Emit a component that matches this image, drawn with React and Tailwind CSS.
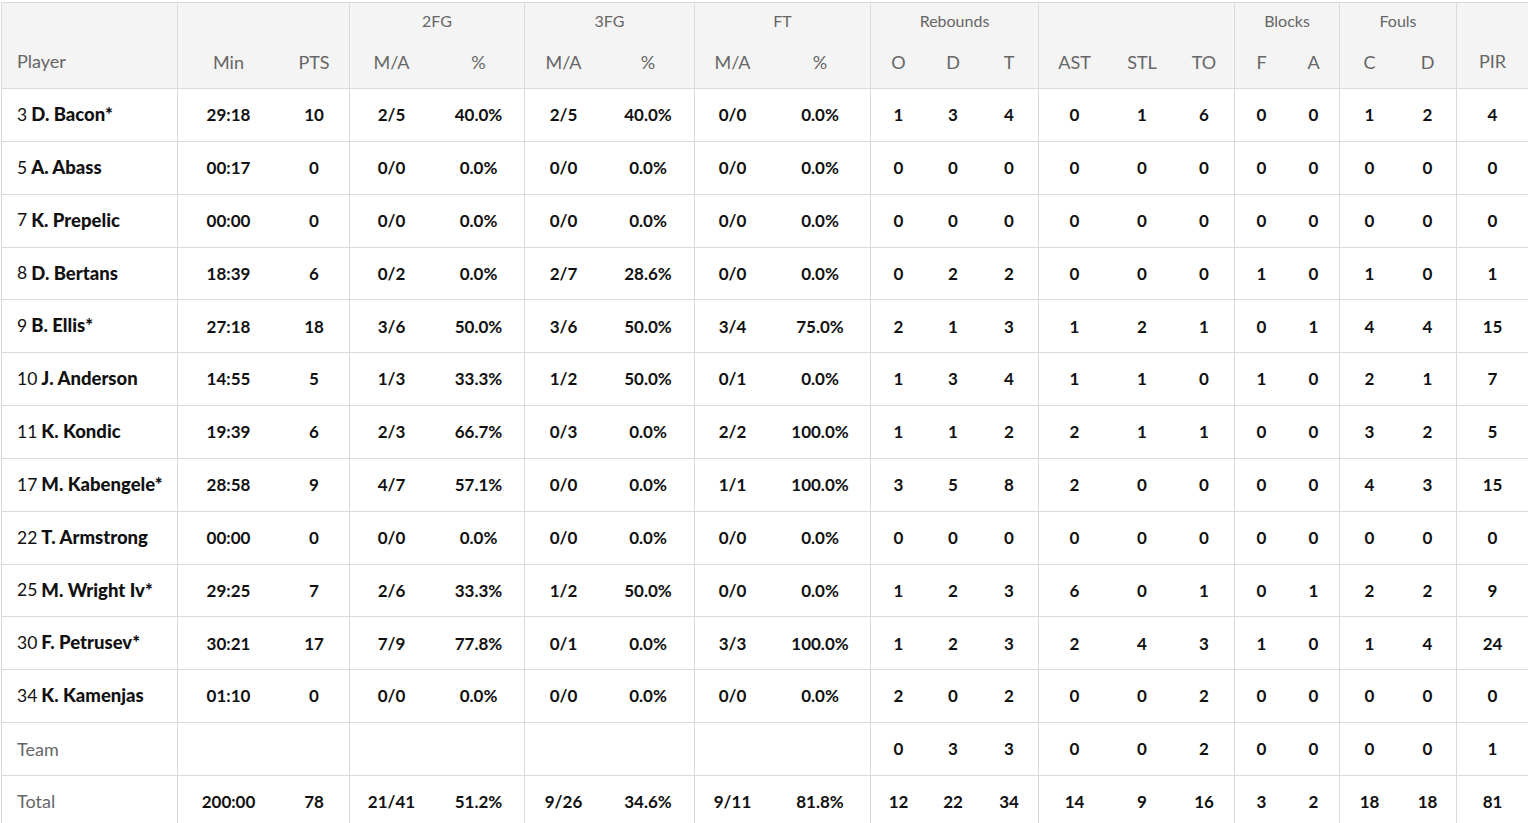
import React from "react";

const rows = [
  ["3", "D. Bacon*", "29:18", "10", "2/5", "40.0%", "2/5", "40.0%", "0/0", "0.0%", "1", "3", "4", "0", "1", "6", "0", "0", "1", "2", "4"],
  ["5", "A. Abass", "00:17", "0", "0/0", "0.0%", "0/0", "0.0%", "0/0", "0.0%", "0", "0", "0", "0", "0", "0", "0", "0", "0", "0", "0"],
  ["7", "K. Prepelic", "00:00", "0", "0/0", "0.0%", "0/0", "0.0%", "0/0", "0.0%", "0", "0", "0", "0", "0", "0", "0", "0", "0", "0", "0"],
  ["8", "D. Bertans", "18:39", "6", "0/2", "0.0%", "2/7", "28.6%", "0/0", "0.0%", "0", "2", "2", "0", "0", "0", "1", "0", "1", "0", "1"],
  ["9", "B. Ellis*", "27:18", "18", "3/6", "50.0%", "3/6", "50.0%", "3/4", "75.0%", "2", "1", "3", "1", "2", "1", "0", "1", "4", "4", "15"],
  ["10", "J. Anderson", "14:55", "5", "1/3", "33.3%", "1/2", "50.0%", "0/1", "0.0%", "1", "3", "4", "1", "1", "0", "1", "0", "2", "1", "7"],
  ["11", "K. Kondic", "19:39", "6", "2/3", "66.7%", "0/3", "0.0%", "2/2", "100.0%", "1", "1", "2", "2", "1", "1", "0", "0", "3", "2", "5"],
  ["17", "M. Kabengele*", "28:58", "9", "4/7", "57.1%", "0/0", "0.0%", "1/1", "100.0%", "3", "5", "8", "2", "0", "0", "0", "0", "4", "3", "15"],
  ["22", "T. Armstrong", "00:00", "0", "0/0", "0.0%", "0/0", "0.0%", "0/0", "0.0%", "0", "0", "0", "0", "0", "0", "0", "0", "0", "0", "0"],
  ["25", "M. Wright Iv*", "29:25", "7", "2/6", "33.3%", "1/2", "50.0%", "0/0", "0.0%", "1", "2", "3", "6", "0", "1", "0", "1", "2", "2", "9"],
  ["30", "F. Petrusev*", "30:21", "17", "7/9", "77.8%", "0/1", "0.0%", "3/3", "100.0%", "1", "2", "3", "2", "4", "3", "1", "0", "1", "4", "24"],
  ["34", "K. Kamenjas", "01:10", "0", "0/0", "0.0%", "0/0", "0.0%", "0/0", "0.0%", "2", "0", "2", "0", "0", "2", "0", "0", "0", "0", "0"],
];

const team = ["", "", "", "", "", "", "", "", "0", "3", "3", "0", "0", "2", "0", "0", "0", "0", "1"];
const total = ["200:00", "78", "21/41", "51.2%", "9/26", "34.6%", "9/11", "81.8%", "12", "22", "34", "14", "9", "16", "3", "2", "18", "18", "81"];

// indices (0-based among the 19 stat columns) that start a new group -> left border
const groupStart = new Set([0, 2, 4, 6, 8, 11, 14, 16, 18]);

const subHeaders = ["Min", "PTS", "M/A", "%", "M/A", "%", "M/A", "%", "O", "D", "T", "AST", "STL", "TO", "F", "A", "C", "D"];

const gridCols =
  "grid grid-cols-[175px_102px_70px_84px_91px_78px_92px_76px_100px_56px_54px_58px_72px_64px_60px_54px_51px_60px_57px_72px]";

function StatCell({ i, children }) {
  return (
    <div
      className={`h-[52.85px] flex items-center justify-center border-b border-[#dadada] text-[17px] font-bold text-[#111] ${
        groupStart.has(i) ? "border-l" : ""
      }`}
    >
      {children}
    </div>
  );
}

function GroupLabel({ span, children }) {
  const spanCls = span === 3 ? "col-span-3" : "col-span-2";
  return (
    <div className={`${spanCls} bg-[#f4f4f4] border-l border-[#dadada] h-[36px] flex items-center justify-center text-[16px] text-[#666]`}>
      {children}
    </div>
  );
}

export default function App() {
  return (
    <div className="w-[1528px] h-[823px] overflow-hidden bg-white pt-[2px] pl-[1px]" style={{ fontFamily: "Lato, 'Noto Sans', sans-serif" }}>
      <div className={`${gridCols} border-t border-l border-[#dadada] w-[1540px]`}>
        {/* Header */}
        <div className="row-span-2 bg-[#f4f4f4] border-b border-[#dadada] flex items-end pl-[15px] pb-[13px] text-[18px] text-[#666]">
          Player
        </div>
        <GroupLabel span={2}></GroupLabel>
        <GroupLabel span={2}>2FG</GroupLabel>
        <GroupLabel span={2}>3FG</GroupLabel>
        <GroupLabel span={2}>FT</GroupLabel>
        <GroupLabel span={3}>Rebounds</GroupLabel>
        <GroupLabel span={3}></GroupLabel>
        <GroupLabel span={2}>Blocks</GroupLabel>
        <GroupLabel span={2}>Fouls</GroupLabel>
        <div className="row-span-2 bg-[#f4f4f4] border-l border-b border-[#dadada] flex items-end justify-center pb-[13px] text-[18px] text-[#666]">
          PIR
        </div>
        {subHeaders.map((h, i) => (
          <div
            key={i}
            className={`h-[50px] bg-[#f4f4f4] border-b border-[#dadada] flex items-center justify-center pb-[3px] text-[18px] text-[#666] ${
              groupStart.has(i) ? "border-l" : ""
            }`}
          >
            {h}
          </div>
        ))}

        {/* Players */}
        {rows.map((r, ri) => (
          <React.Fragment key={ri}>
            <div className="h-[52.85px] flex items-center pl-[15px] border-b border-[#dadada] text-[17.5px] text-[#111] whitespace-nowrap">
              <span>{r[0]}</span>
              <span className="font-black text-[18.5px] ml-[4px]">{r[1]}</span>
            </div>
            {r.slice(2).map((v, i) => (
              <StatCell key={i} i={i}>
                {v}
              </StatCell>
            ))}
          </React.Fragment>
        ))}

        {/* Team */}
        <div className="h-[52.85px] flex items-center pl-[15px] border-b border-[#dadada] text-[18px] text-[#666]">Team</div>
        {team.map((v, i) => (
          <StatCell key={i} i={i}>
            {v}
          </StatCell>
        ))}

        {/* Total */}
        <div className="h-[52.85px] flex items-center pl-[15px] border-b border-[#dadada] text-[18px] text-[#666]">Total</div>
        {total.map((v, i) => (
          <StatCell key={i} i={i}>
            {v}
          </StatCell>
        ))}
      </div>
    </div>
  );
}
